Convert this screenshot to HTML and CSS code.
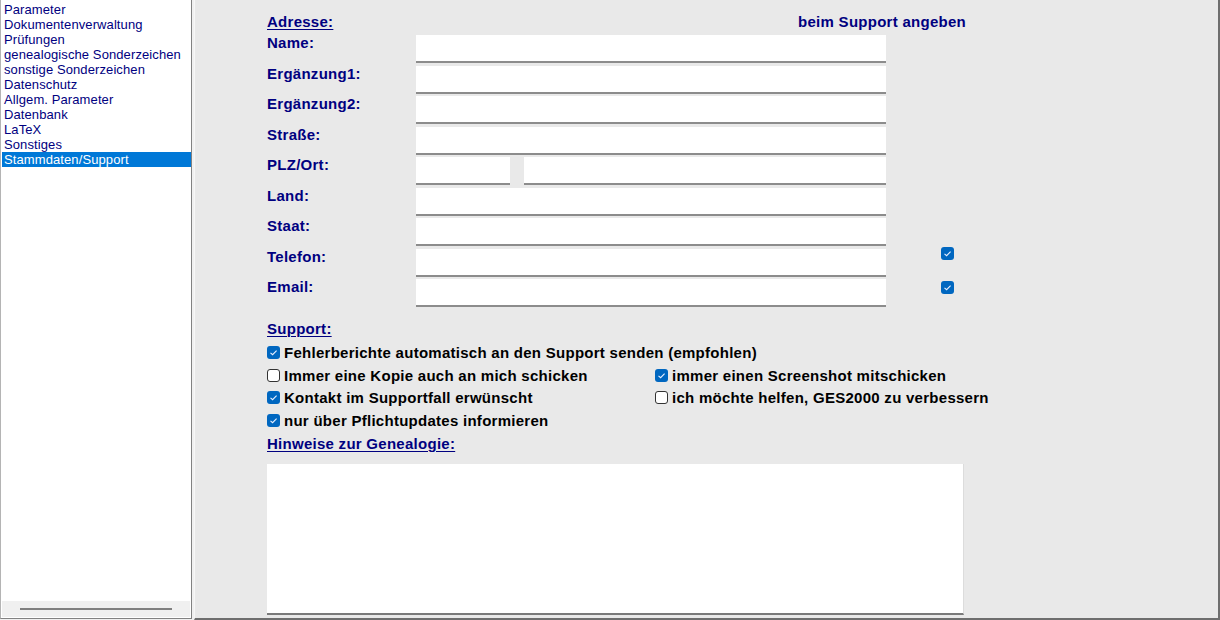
FILE: index.html
```html
<!DOCTYPE html>
<html lang="de">
<head>
<meta charset="utf-8">
<title>Stammdaten/Support</title>
<link rel="stylesheet" href="styles.css">
</head>
<body>
<div class="app">
  <aside class="nav">
    <ul class="nav-list">
      <li>Parameter</li>
      <li>Dokumentenverwaltung</li>
      <li>Prüfungen</li>
      <li>genealogische Sonderzeichen</li>
      <li>sonstige Sonderzeichen</li>
      <li>Datenschutz</li>
      <li>Allgem. Parameter</li>
      <li>Datenbank</li>
      <li>LaTeX</li>
      <li>Sonstiges</li>
      <li class="selected">Stammdaten/Support</li>
    </ul>
    <div class="nav-scroll"><div class="nav-thumb"></div></div>
  </aside>
  <main class="main">
    <div class="header">
      <span class="section-title">Adresse:</span>
      <span class="hint">beim Support angeben</span>
    </div>
    <div class="form">
      <label class="lbl">Name:</label><div class="field"></div><div class="chk-cell"></div>
      <label class="lbl">Ergänzung1:</label><div class="field"></div><div class="chk-cell"></div>
      <label class="lbl">Ergänzung2:</label><div class="field"></div><div class="chk-cell"></div>
      <label class="lbl">Straße:</label><div class="field"></div><div class="chk-cell"></div>
      <label class="lbl">PLZ/Ort:</label>
      <div class="split"><div class="field plz"></div><div class="field ort"></div></div>
      <div class="chk-cell"></div>
      <label class="lbl">Land:</label><div class="field"></div><div class="chk-cell"></div>
      <label class="lbl">Staat:</label><div class="field"></div><div class="chk-cell"></div>
      <label class="lbl">Telefon:</label><div class="field"></div>
      <div class="chk-cell up"><span class="cb on"><svg viewBox="0 0 13 13"><path d="M3.5 6.8 L5.6 8.7 L9.6 4.7" fill="none" stroke="#e8f0ff" stroke-width="1.1"/></svg></span></div>
      <label class="lbl">Email:</label><div class="field"></div>
      <div class="chk-cell down"><span class="cb on"><svg viewBox="0 0 13 13"><path d="M3.5 6.8 L5.6 8.7 L9.6 4.7" fill="none" stroke="#e8f0ff" stroke-width="1.1"/></svg></span></div>
    </div>

    <div class="section-title support-title">Support:</div>
    <div class="options">
      <div class="opt wide"><span class="cb on"><svg viewBox="0 0 13 13"><path d="M3.5 6.8 L5.6 8.7 L9.6 4.7" fill="none" stroke="#e8f0ff" stroke-width="1.1"/></svg></span>Fehlerberichte automatisch an den Support senden (empfohlen)</div>
      <div class="opt"><span class="cb off"></span>Immer eine Kopie auch an mich schicken</div>
      <div class="opt"><span class="cb on"><svg viewBox="0 0 13 13"><path d="M3.5 6.8 L5.6 8.7 L9.6 4.7" fill="none" stroke="#e8f0ff" stroke-width="1.1"/></svg></span>immer einen Screenshot mitschicken</div>
      <div class="opt"><span class="cb on"><svg viewBox="0 0 13 13"><path d="M3.5 6.8 L5.6 8.7 L9.6 4.7" fill="none" stroke="#e8f0ff" stroke-width="1.1"/></svg></span>Kontakt im Supportfall erwünscht</div>
      <div class="opt"><span class="cb off"></span>ich möchte helfen, GES2000 zu verbessern</div>
      <div class="opt wide"><span class="cb on"><svg viewBox="0 0 13 13"><path d="M3.5 6.8 L5.6 8.7 L9.6 4.7" fill="none" stroke="#e8f0ff" stroke-width="1.1"/></svg></span>nur über Pflichtupdates informieren</div>
    </div>

    <div class="section-title notes-title">Hinweise zur Genealogie:</div>
    <div class="notes"></div>
  </main>
</div>
</body>
</html>
```

FILE: styles.css
```css
html, body {
  margin: 0;
  padding: 0;
  background: #f0f0f0;
  font-family: "Liberation Sans", Arial, sans-serif;
}

.app {
  display: flex;
  width: 1220px;
  height: 620px;
  box-sizing: border-box;
}

/* ---------- left navigation ---------- */
.nav {
  width: 192px;
  height: 619px;
  box-sizing: border-box;
  background: #ffffff;
  border-left: 1px solid #b4b4b4;
  border-right: 1px solid #828282;
  border-bottom: 1px solid #828282;
  display: flex;
  flex-direction: column;
  justify-content: space-between;
}

.nav-list {
  list-style: none;
  margin: 2px 0 0 0;
  padding: 0 0 0 1px;
  font-size: 13px;
  line-height: 15px;
  letter-spacing: 0.1px;
  color: #000080;
}

.nav-list li {
  padding-left: 2px;
  height: 15px;
  white-space: nowrap;
}

.nav-list li.selected {
  background: #0078d7;
  color: #ffffff;
}

.nav-scroll {
  height: 16px;
  background: #f0f0f0;
  margin: 0 1px 1px 1px;
  display: flex;
  align-items: center;
  padding-left: 18px;
}

.nav-thumb {
  width: 152px;
  height: 2px;
  background: #808080;
}

/* ---------- main panel ---------- */
.main {
  margin-left: 2px;
  width: 1026px;
  height: 620px;
  box-sizing: border-box;
  background: #e9e9e9;
  border-left: 1px solid #f7f7f7;
  border-right: 2px solid #6e6e6e;
  border-bottom: 2px solid #6e6e6e;
  padding: 13px 0 0 72px;
  color: #000080;
  font-size: 15px;
  font-weight: bold;
  letter-spacing: 0.27px;
}

.header {
  display: flex;
  justify-content: space-between;
  width: 699px;
  height: 22px;
  line-height: 17px;
}

.section-title {
  text-decoration: underline;
  text-underline-offset: 2px;
  text-decoration-thickness: 1px;
}

.hint {
  white-space: nowrap;
}

.form {
  display: grid;
  grid-template-columns: 149px 470px 81px;
  grid-auto-rows: 30.5px;
}

.lbl {
  line-height: 15px;
  font-weight: bold;
  color: #000080;
}

.field {
  height: 28px;
  box-sizing: border-box;
  background: #ffffff;
  border-bottom: 2px solid #8c8c8c;
}

.split {
  display: flex;
  gap: 14px;
}

.split .plz {
  width: 94px;
}

.split .ort {
  flex: 1;
}

.chk-cell {
  display: flex;
  justify-content: flex-end;
  align-items: flex-start;
  padding-right: 13px;
}

.chk-cell.up {
  margin-top: -2px;
}

.chk-cell.down {
  padding-top: 2px;
}

/* ---------- checkboxes ---------- */
.cb {
  display: inline-block;
  width: 13px;
  height: 13px;
  box-sizing: border-box;
  border-radius: 3px;
  flex: none;
}

.cb svg {
  display: block;
  width: 13px;
  height: 13px;
}

.cb.on {
  background: #0067c0;
}

.cb.off {
  background: #ffffff;
  border: 1px solid #333333;
}

/* ---------- support ---------- */
.support-title {
  margin-top: 10px;
  line-height: 17px;
  width: max-content;
}

.options {
  display: grid;
  grid-template-columns: 388px 330px;
  grid-auto-rows: 22.6px;
  margin-top: 5px;
  color: #000000;
}

.opt {
  display: flex;
  align-items: center;
  gap: 4px;
  white-space: nowrap;
  line-height: 17px;
}

.opt.wide {
  grid-column: 1 / -1;
}

.notes-title {
  margin-top: 3px;
  line-height: 17px;
  width: max-content;
}

.notes {
  margin-top: 12px;
  width: 697px;
  height: 151px;
  box-sizing: border-box;
  background: #ffffff;
  border-bottom: 2px solid #7a7a7a;
  border-right: 1px solid #dcdcdc;
}
```
